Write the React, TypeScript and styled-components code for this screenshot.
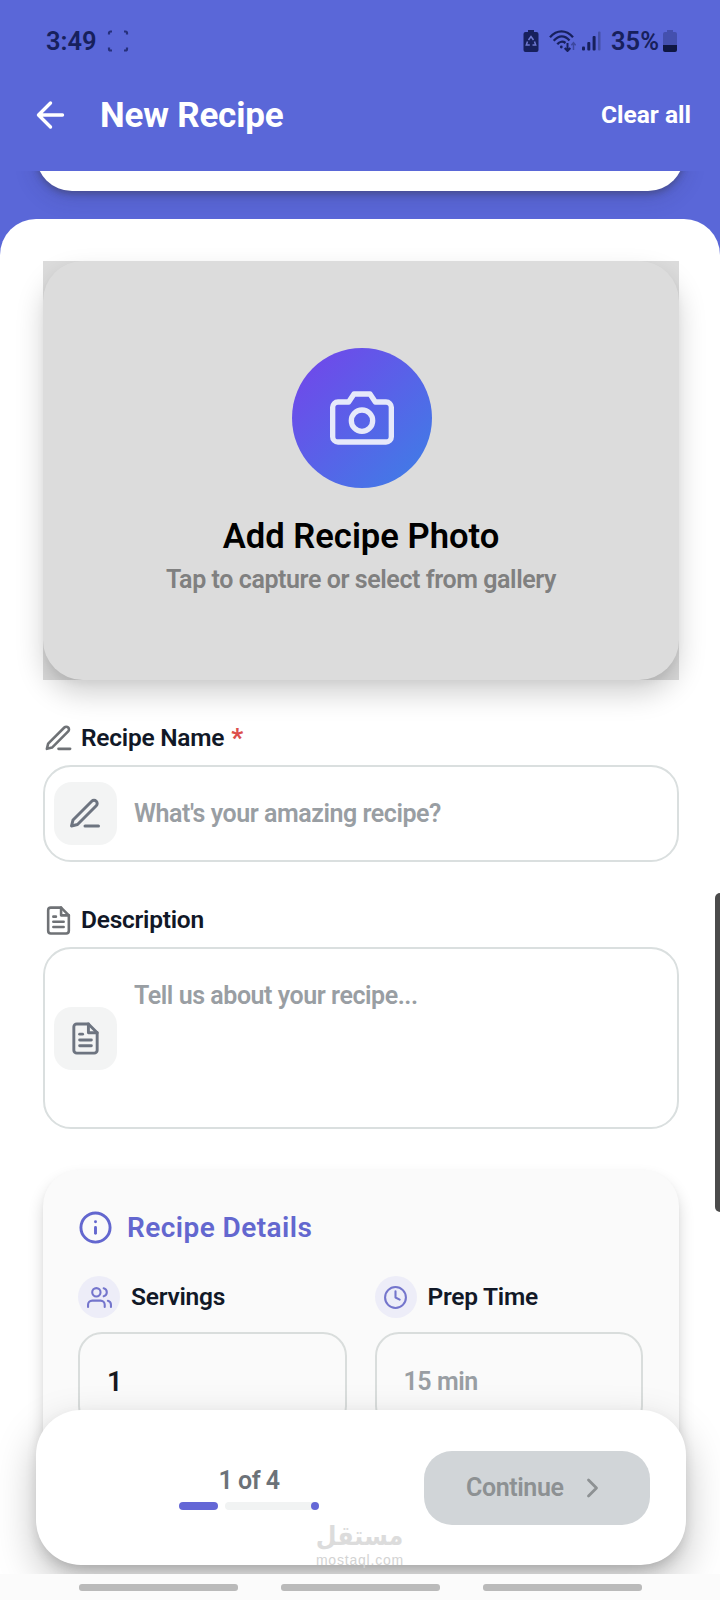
import React from 'react';
import styled, { createGlobalStyle } from 'styled-components';
import { FiCamera, FiClock, FiEdit3, FiFileText, FiInfo, FiUsers } from 'react-icons/fi';

const GlobalStyle = createGlobalStyle`
  *, *::before, *::after { box-sizing: border-box; }
  body { margin: 0; background: #fff; }
  svg { display: block; flex: none; }
`;

const Screen = styled.div`
  position: relative;
  display: flex;
  flex-direction: column;
  width: 720px;
  height: 1600px;
  overflow: hidden;
  background: #5a67d8;
  font-family: Roboto, sans-serif;
  font-weight: 600;
`;

const TopArea = styled.header`
  flex: none;
  height: 171px;
  color: #fff;
`;

const StatusBar = styled.div`
  display: flex;
  align-items: center;
  height: 80px;
  padding: 1px 43px 0 46px;
  color: #17205c;
`;

const StatusText = styled.span<{ $width: number }>`
  width: ${(p) => p.$width}px;
  font-size: 25.5px;
  line-height: 30px;
  white-space: nowrap;
`;

const StatusIcons = styled.div`
  display: flex;
  align-items: center;
  margin-left: auto;
`;

const IconGroup = styled.div`
  display: flex;
  align-items: center;
  gap: 6px;
  margin: 0 10px;
`;

const AppBar = styled.div`
  display: flex;
  align-items: center;
  height: 70px;
  padding: 0 29px 0 35px;
`;

const Title = styled.h1`
  margin: 0 auto 0 33px;
  padding-top: 1px;
  font-size: 35px;
  font-weight: 700;
  line-height: 40px;
  letter-spacing: -0.2px;
`;

const ClearButton = styled.button`
  padding: 0;
  border: 0;
  background: none;
  color: inherit;
  font: 700 24.5px/30px Roboto, sans-serif;
`;

const ScrollArea = styled.main`
  flex: 1;
  min-height: 0;
  overflow: hidden;
`;

const PreviousCard = styled.div`
  height: 80px;
  margin: -60px 36px 28px;
  border-radius: 36px;
  background: #fff;
  box-shadow: 0 3px 6px rgba(60, 60, 85, 0.45), 0 6px 22px rgba(40, 44, 90, 0.22);
`;

const Sheet = styled.section`
  display: flex;
  flex-direction: column;
  min-height: 1500px;
  padding: 42px 41px 0 43px;
  border-radius: 36px 36px 0 0;
  background: #fff;
`;

const PhotoCard = styled.div`
  flex: none;
  height: 419px;
  border-radius: 40px;
  background: #fff;
  box-shadow: 0 14px 28px rgba(0, 0, 0, 0.18), 0 4px 7px rgba(0, 0, 0, 0.04);
`;

const PhotoTint = styled.div`
  display: flex;
  flex-direction: column;
  align-items: center;
  height: 100%;
  padding: 87px 0 0;
  background: rgba(0, 0, 0, 0.137);
`;

const CameraDisc = styled.div`
  display: grid;
  place-items: center;
  width: 140px;
  height: 140px;
  margin-left: 2px;
  border-radius: 50%;
  background: linear-gradient(135deg, #7048ea 8%, #3f7de6 95%);
  color: #e6e9fa;
`;

const PhotoTitle = styled.h2`
  margin: 28px 0 0;
  color: #000;
  font-size: 34.6px;
  font-weight: 600;
  line-height: 40px;
  white-space: nowrap;
`;

const PhotoHint = styled.p`
  margin: 9px 0 0;
  color: #808080;
  font-size: 25px;
  line-height: 30px;
  letter-spacing: -0.42px;
  white-space: nowrap;
`;

const FieldLabel = styled.div<{ $top: number }>`
  display: flex;
  align-items: center;
  gap: 7px;
  height: 32px;
  margin: ${(p) => p.$top}px 0 11px;
  color: #6f7276;
`;

const LabelText = styled.span`
  color: #111827;
  font-size: 24.5px;
  line-height: 32px;
  letter-spacing: -0.25px;
  white-space: nowrap;
`;

const Required = styled.span`
  color: #dc4f4c;
  font-size: 26px;
  font-weight: 800;
  line-height: 32px;
`;

const Field = styled.div<{ $height: number }>`
  display: flex;
  flex: none;
  align-items: center;
  gap: 17px;
  height: ${(p) => p.$height}px;
  padding-left: 9px;
  border: 2px solid #dadfdf;
  border-radius: 28px;
  background: #fff;
`;

const FieldIcon = styled.div`
  display: grid;
  flex: none;
  place-items: center;
  width: 63px;
  height: 63px;
  padding-right: 1px;
  border-radius: 18px;
  background: #f3f4f4;
  color: #6d7480;
`;

const Placeholder = styled.span<{ $top?: number }>`
  ${(p) => p.$top !== undefined && `align-self: flex-start; margin-top: ${p.$top}px;`}
  padding-top: 1px;
  color: #999ea3;
  font-size: 25px;
  line-height: 30px;
  letter-spacing: -0.45px;
  white-space: nowrap;
`;

const DetailsCard = styled.section`
  flex: none;
  height: 387px;
  margin-top: 41px;
  padding: 39px 36px 0 35px;
  border-radius: 36px;
  background: #fafafa;
  box-shadow: 0 9px 16px rgba(0, 0, 0, 0.16), 0 2px 4px rgba(0, 0, 0, 0.04);
`;

const DetailsHeading = styled.h3`
  display: flex;
  align-items: center;
  gap: 14px;
  height: 36px;
  margin: 0 0 31px;
  color: #6367cf;
  font-size: 28px;
  font-weight: 600;
  letter-spacing: 0.43px;
  white-space: nowrap;
`;

const DetailsGrid = styled.div`
  display: grid;
  grid-template-columns: 1fr 1fr;
  column-gap: 28px;
`;

const DetailLabel = styled.div`
  display: flex;
  align-items: center;
  gap: 11px;
  height: 42px;
  margin-bottom: 14px;
`;

const IconDisc = styled.div`
  display: grid;
  flex: none;
  place-items: center;
  width: 42px;
  height: 42px;
  border-radius: 50%;
  background: #ededf8;
  color: #7475cc;
`;

const DetailInput = styled.div<{ $filled?: boolean }>`
  height: 98px;
  padding: 33px 27px;
  border: 2px solid #d9dddc;
  border-radius: 24px;
  color: ${(p) => (p.$filled ? '#17191d' : '#999ea3')};
  font-size: ${(p) => (p.$filled ? 27 : 25)}px;
  line-height: 30px;
  letter-spacing: -0.45px;
`;

const BottomBar = styled.div`
  position: absolute;
  top: 1410px;
  left: 36px;
  display: flex;
  align-items: center;
  width: 650px;
  height: 155px;
  padding: 0 36px 0 34px;
  border-radius: 45px;
  background: #fff;
  box-shadow: 0 18px 40px rgba(0, 0, 0, 0.25), 0 5px 14px rgba(0, 0, 0, 0.05);
`;

const Progress = styled.div`
  display: flex;
  flex: 1;
  flex-direction: column;
  align-items: center;
  gap: 6px;
  padding: 1px 0 0 4px;
  color: #6c7278;
  font-size: 25px;
  line-height: 30px;
  letter-spacing: -0.5px;
`;

const ProgressTrack = styled.div`
  display: flex;
  gap: 7px;
  width: 140px;
  height: 8px;
`;

const ProgressDone = styled.div`
  width: 39px;
  border-radius: 4px;
  background: #6467d6;
`;

const ProgressRest = styled.div`
  display: flex;
  flex: 1;
  justify-content: flex-end;
  border-radius: 4px;
  background: #f1f3f3;
`;

const ProgressStop = styled.div`
  width: 8px;
  height: 8px;
  border-radius: 50%;
  background: #6467d6;
`;

const ContinueButton = styled.button`
  display: flex;
  align-items: center;
  gap: 22px;
  width: 226px;
  height: 74px;
  padding: 0 0 0 42px;
  border: 0;
  border-radius: 28px;
  background: #d1d5d8;
  color: #8d9193;
  font: 600 25px/30px Roboto, sans-serif;
  letter-spacing: -0.4px;
`;

const Watermark = styled.div`
  position: absolute;
  top: 1521px;
  left: 310px;
  display: flex;
  flex-direction: column;
  align-items: center;
  width: 100px;
  color: #dcdcdc;
  white-space: nowrap;
`;

const WatermarkName = styled.span`
  font: 700 26px/31px 'DejaVu Sans', sans-serif;
  transform: scaleX(0.92);
`;

const WatermarkSite = styled.span`
  color: #d3d3d3;
  font: 400 14px/17px 'Liberation Sans', sans-serif;
  letter-spacing: 0.8px;
`;

const SystemNav = styled.nav`
  position: relative;
  display: flex;
  flex: none;
  justify-content: center;
  gap: 43px;
  height: 26px;
  padding: 10px 0 0 1px;
  background: #fbfbfb;
`;

const NavPill = styled.span`
  width: 159px;
  height: 7px;
  border-radius: 3px;
  background: #bababa;
`;

const ScrollThumb = styled.div`
  position: absolute;
  top: 893px;
  right: 0;
  width: 5px;
  height: 319px;
  border-radius: 5px 0 0 5px;
  background: #4b4b4b;
`;

const CaptureIcon = () => (
  <svg width="24" height="24" viewBox="0 0 24 24" fill="none" stroke="#26307c" strokeWidth="2.200">
    <path d="M3 5.500V4a1.500 1.500 0 0 1 1.500-1.500H6M18 2.500h1.500A1.500 1.500 0 0 1 21 4v1.500M21 18.500V20a1.500 1.500 0 0 1-1.500 1.500H18M6 21.500H4.500A1.500 1.500 0 0 1 3 20v-1.500" />
  </svg>
);

const BatterySaverIcon = () => (
  <svg width="16" height="22" viewBox="0 0 16 22">
    <path fill="#17205c" d="M5 0h6v2h2.500a2 2 0 0 1 2 2v16a2 2 0 0 1-2 2h-11a2 2 0 0 1-2-2V4a2 2 0 0 1 2-2H5z" />
    <path
      fill="none"
      stroke="#6e78cf"
      strokeWidth="1.500"
      d="M5.500 10 8 6.500l2.500 3.500M11.500 11.500l1.200 3.500H9.500M4.500 11.500 3.300 15h3.500"
    />
  </svg>
);

const WifiIcon = () => (
  <svg width="27" height="22" viewBox="0 0 27 22" fill="none" stroke="#17205c" strokeWidth="2.300">
    <path d="M1 7.200C8-.6 17-.6 24 7.200M4.700 10.800C10 5 15.500 5 20.500 10.500M8.300 14.200C10.500 11.500 14 11 16.500 13" />
    <circle cx="12.300" cy="17" r="1.400" fill="#17205c" stroke="none" />
    <path strokeWidth="2" d="M18.500 13v8M15.700 18l2.800 3 2.800-3" />
    <path stroke="#3d489f" strokeWidth="1.500" d="M24.500 20v-7M22.300 15.200l2.200-2.500 2.200 2.500" />
  </svg>
);

const SignalIcon = () => (
  <svg width="19" height="20" viewBox="0 0 19 20" fill="#17205c">
    <rect x="0" y="15.500" width="3" height="4" rx="1" />
    <rect x="5.300" y="11" width="3" height="8.500" rx="1" />
    <rect x="10.600" y="5" width="3" height="14.500" rx="1" />
    <rect x="16" y="0.500" width="2.500" height="19" rx="1" fill="#4450a8" />
  </svg>
);

const BatteryIcon = () => (
  <svg width="14" height="22" viewBox="0 0 14 22">
    <path fill="#4450ae" d="M4 0h6v2h2a2 2 0 0 1 2 2v11H0V4a2 2 0 0 1 2-2h2z" />
    <path fill="#0f1742" d="M0 15h14v5a2 2 0 0 1-2 2H2a2 2 0 0 1-2-2z" />
  </svg>
);

const BackArrow = () => (
  <svg width="32" height="30" viewBox="0 0 32 30" fill="none" stroke="#fff" strokeWidth="3.400">
    <path strokeLinecap="round" strokeLinejoin="round" d="M15.500 3 3.500 15l12 12M4 15h23.500" />
  </svg>
);

const ChevronIcon = () => (
  <svg width="14" height="22" viewBox="0 0 14 22" fill="none" stroke="#8d9193" strokeWidth="2.800">
    <path strokeLinecap="round" strokeLinejoin="round" d="m2.500 3 8 8-8 8" />
  </svg>
);

export default function App() {
  return (
    <>
      <GlobalStyle />
      <Screen>
        <TopArea>
          <StatusBar>
            <StatusText $width={60}>3:49</StatusText>
            <CaptureIcon />
            <StatusIcons>
              <BatterySaverIcon />
              <IconGroup>
                <WifiIcon />
                <SignalIcon />
              </IconGroup>
              <StatusText $width={52}>35%</StatusText>
              <BatteryIcon />
            </StatusIcons>
          </StatusBar>
          <AppBar>
            <BackArrow />
            <Title>New Recipe</Title>
            <ClearButton>Clear all</ClearButton>
          </AppBar>
        </TopArea>
        <ScrollArea>
          <PreviousCard />
          <Sheet>
            <PhotoCard>
              <PhotoTint>
                <CameraDisc>
                  <FiCamera size={64} />
                </CameraDisc>
                <PhotoTitle>Add Recipe Photo</PhotoTitle>
                <PhotoHint>Tap to capture or select from gallery</PhotoHint>
              </PhotoTint>
            </PhotoCard>

            <FieldLabel $top={42}>
              <FiEdit3 size={31} />
              <LabelText>Recipe Name</LabelText>
              <Required>*</Required>
            </FieldLabel>
            <Field $height={97}>
              <FieldIcon>
                <FiEdit3 size={36} />
              </FieldIcon>
              <Placeholder>What's your amazing recipe?</Placeholder>
            </Field>

            <FieldLabel $top={42}>
              <FiFileText size={31} />
              <LabelText>Description</LabelText>
            </FieldLabel>
            <Field $height={182}>
              <FieldIcon>
                <FiFileText size={35} />
              </FieldIcon>
              <Placeholder $top={31}>Tell us about your recipe...</Placeholder>
            </Field>

            <DetailsCard>
              <DetailsHeading>
                <FiInfo size={35} />
                Recipe Details
              </DetailsHeading>
              <DetailsGrid>
                <div>
                  <DetailLabel>
                    <IconDisc>
                      <FiUsers size={25} />
                    </IconDisc>
                    <LabelText>Servings</LabelText>
                  </DetailLabel>
                  <DetailInput $filled>1</DetailInput>
                </div>
                <div>
                  <DetailLabel>
                    <IconDisc>
                      <FiClock size={25} />
                    </IconDisc>
                    <LabelText>Prep Time</LabelText>
                  </DetailLabel>
                  <DetailInput>15 min</DetailInput>
                </div>
              </DetailsGrid>
            </DetailsCard>
          </Sheet>
        </ScrollArea>

        <BottomBar>
          <Progress>
            1 of 4
            <ProgressTrack>
              <ProgressDone />
              <ProgressRest>
                <ProgressStop />
              </ProgressRest>
            </ProgressTrack>
          </Progress>
          <ContinueButton>
            Continue
            <ChevronIcon />
          </ContinueButton>
        </BottomBar>
        <SystemNav>
          <NavPill />
          <NavPill />
          <NavPill />
        </SystemNav>
        <Watermark>
          <WatermarkName lang="ar">مستقل</WatermarkName>
          <WatermarkSite>mostaql.com</WatermarkSite>
        </Watermark>
        <ScrollThumb />
      </Screen>
    </>
  );
}
